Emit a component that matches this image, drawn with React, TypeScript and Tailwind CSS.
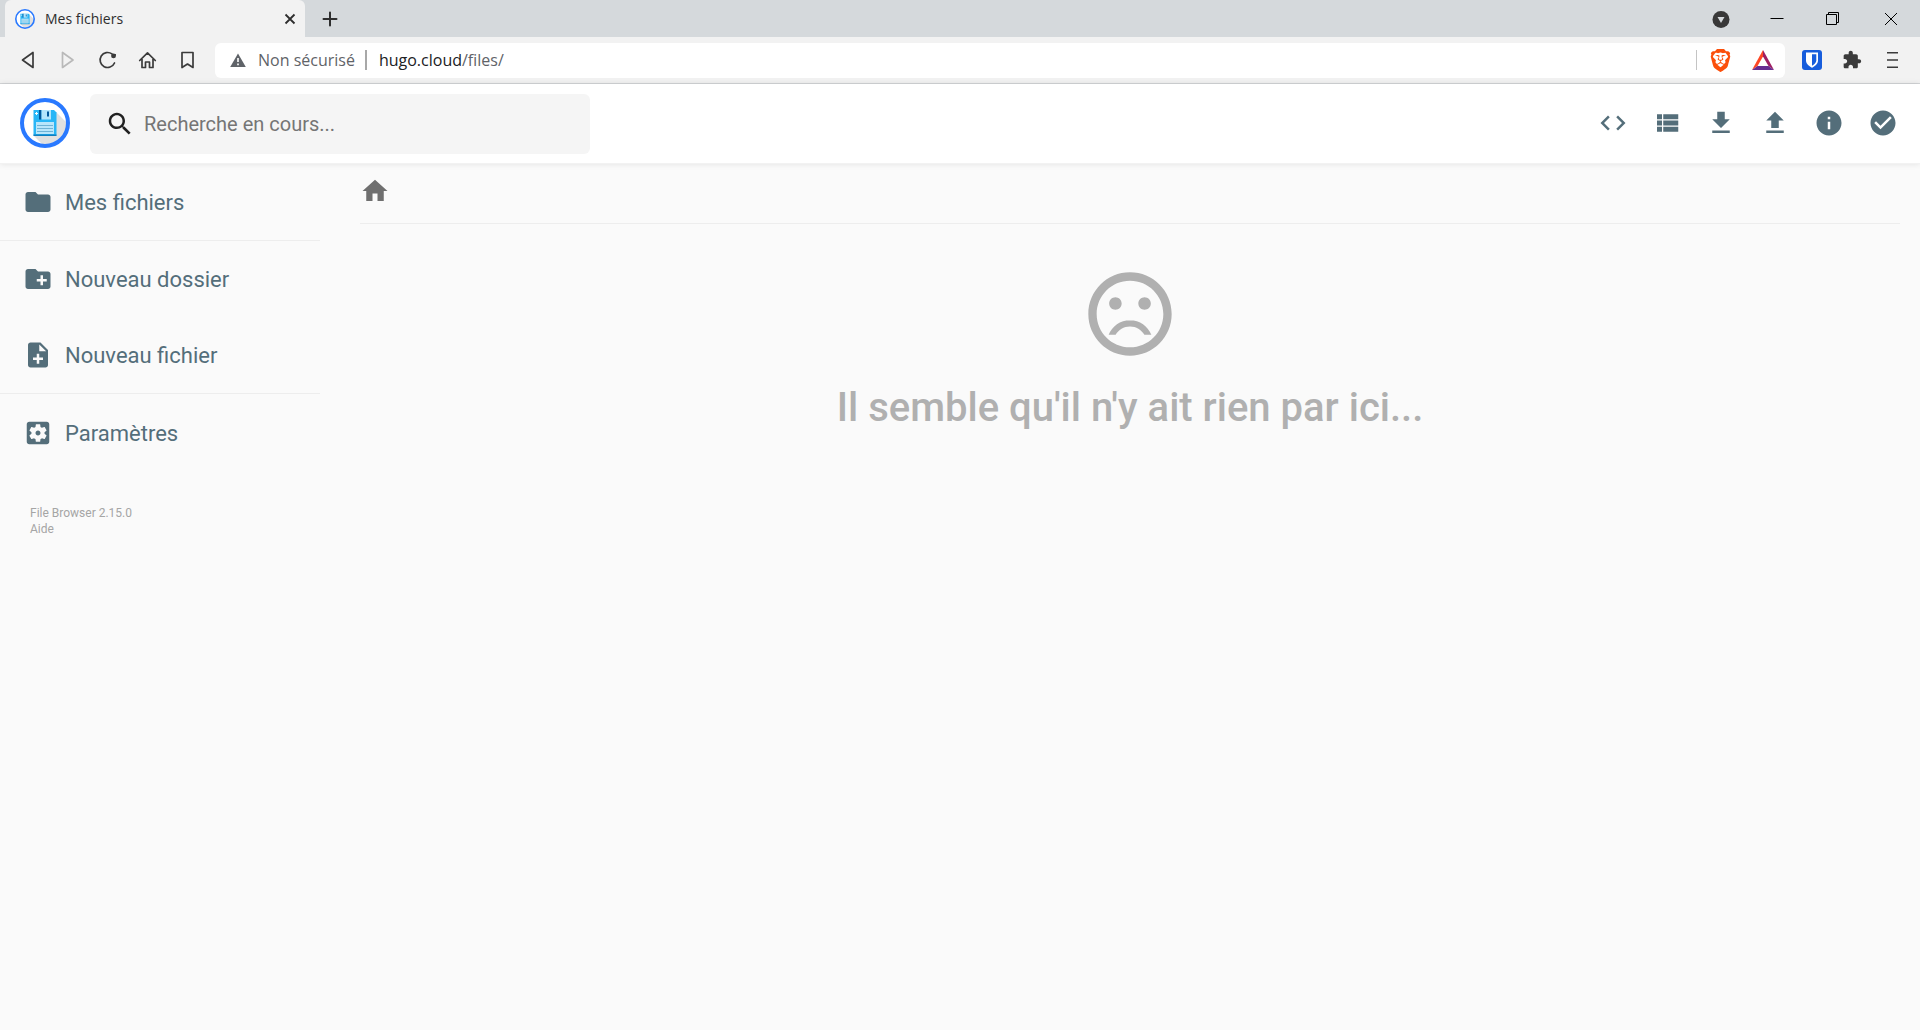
import React from 'react';
import { SiBrave } from 'react-icons/si';

const paths = {
  code: 'M9.4 16.6L4.8 12l4.6-4.6L8 6l-6 6 6 6 1.4-1.4zm5.2 0l4.6-4.6-4.6-4.6L16 6l6 6-6 6-1.4-1.4z',
  list: 'M4 14h4v-4H4v4zm0 5h4v-4H4v4zM4 9h4V5H4v4zm5 5h12v-4H9v4zm0 5h12v-4H9v4zM9 5v4h12V5H9z',
  fileDownload: 'M19 9h-4V3H9v6H5l7 7 7-7zM5 18v2h14v-2H5z',
  fileUpload: 'M9 16h6v-6h4l-7-7-7 7h4zm-4 2h14v2H5z',
  info: 'M12 2C6.48 2 2 6.48 2 12s4.48 10 10 10 10-4.48 10-10S17.52 2 12 2zm1 15h-2v-6h2v6zm0-8h-2V7h2v2z',
  check: 'M12 2C6.48 2 2 6.48 2 12s4.48 10 10 10 10-4.48 10-10S17.52 2 12 2zm-2 15l-5-5 1.41-1.41L10 14.17l7.59-7.59L19 8l-9 9z',
  search: 'M15.5 14h-.79l-.28-.27C15.41 12.59 16 11.11 16 9.5 16 5.91 13.09 3 9.5 3S3 5.91 3 9.5 5.91 16 9.5 16c1.61 0 3.09-.59 4.23-1.57l.27.28v.79l5 4.99L20.49 19l-4.99-5zm-6 0C7.01 14 5 11.99 5 9.5S7.01 5 9.5 5 14 7.01 14 9.5 11.99 14 9.5 14z',
  folder: 'M10 4H4c-1.1 0-1.99.9-1.99 2L2 18c0 1.1.9 2 2 2h16c1.1 0 2-.9 2-2V8c0-1.1-.9-2-2-2h-8l-2-2z',
  newFolder: 'M20 6h-8l-2-2H4c-1.11 0-1.99.89-1.99 2L2 18c0 1.11.89 2 2 2h16c1.11 0 2-.89 2-2V8c0-1.11-.89-2-2-2zm-1 8h-3v3h-2v-3h-3v-2h3V9h2v3h3v2z',
  newFile: 'M14 2H6c-1.1 0-1.99.9-1.99 2L4 20c0 1.1.89 2 1.99 2H18c1.1 0 2-.9 2-2V8l-6-6zm2 14h-3v3h-2v-3H8v-2h3v-3h2v3h3v2zm-3-7V3.5L18.5 9H13z',
  settings: 'M12 10c-1.1 0-2 .9-2 2s.9 2 2 2 2-.9 2-2-.9-2-2-2zm7-7H5c-1.11 0-2 .9-2 2v14c0 1.1.89 2 2 2h14c1.11 0 2-.9 2-2V5c0-1.1-.89-2-2-2zm-1.75 9c0 .23-.02.46-.05.68l1.48 1.16c.13.11.17.3.08.45l-1.4 2.42c-.09.15-.27.21-.43.15l-1.74-.7c-.36.28-.76.51-1.18.69l-.26 1.85c-.03.17-.18.3-.35.3h-2.8c-.17 0-.32-.13-.35-.29l-.26-1.85c-.43-.18-.82-.41-1.18-.69l-1.74.7c-.16.06-.34 0-.43-.15l-1.4-2.42c-.09-.15-.05-.34.08-.45l1.48-1.16c-.03-.23-.05-.46-.05-.69 0-.23.02-.46.05-.68l-1.48-1.16c-.13-.11-.17-.3-.08-.45l1.4-2.42c.09-.15.27-.21.43-.15l1.74.7c.36-.28.76-.51 1.18-.69l.26-1.85c.03-.17.18-.3.35-.3h2.8c.17 0 .32.13.35.29l.26 1.85c.43.18.82.41 1.18.69l1.74-.7c.16-.06.34 0 .43.15l1.4 2.42c.09.15.05.34-.08.45l-1.48 1.16c.03.23.05.46.05.69z',
  home: 'M10 20v-6h4v6h5v-8h3L12 3 2 12h3v8z',
  sad: 'M11.99 2C6.47 2 2 6.48 2 12s4.47 10 9.99 10C17.52 22 22 17.52 22 12S17.52 2 11.99 2zM12 20c-4.42 0-8-3.58-8-8s3.58-8 8-8 8 3.58 8 8-3.58 8-8 8zm3.5-9c.83 0 1.5-.67 1.5-1.5S16.33 8 15.5 8 14 8.67 14 9.5s.67 1.5 1.5 1.5zm-7 0c.83 0 1.5-.67 1.5-1.5S9.33 8 8.5 8 7 8.67 7 9.5 7.67 11 8.5 11zm3.5 2.5c-2.33 0-4.32 1.45-5.12 3.5h1.67c.69-1.19 1.97-2 3.45-2s2.75.81 3.45 2h1.67c-.8-2.05-2.79-3.5-5.12-3.5z',
  puzzle: 'M20.5 11H19V7c0-1.1-.9-2-2-2h-4V3.5C13 2.12 11.88 1 10.5 1S8 2.12 8 3.5V5H4c-1.1 0-1.99.9-1.99 2v3.8H3.5c1.49 0 2.7 1.21 2.7 2.7s-1.21 2.7-2.7 2.7H2V20c0 1.1.9 2 2 2h3.8v-1.5c0-1.49 1.21-2.7 2.7-2.7 1.49 0 2.7 1.21 2.7 2.7V22H17c1.1 0 2-.9 2-2v-4h1.5c1.38 0 2.5-1.12 2.5-2.5S21.88 11 20.5 11z',
};

function Icon({ d, className }: { d: string; className: string }) {
  return (
    <svg viewBox="0 0 24 24" fill="currentColor" aria-hidden="true" className={className}>
      <path d={d} />
    </svg>
  );
}

function Logo({ className }: { className: string }) {
  return (
    <svg viewBox="0 0 50 50" aria-hidden="true" className={className}>
      <circle cx="25" cy="25" r="23" fill="#fff" />
      <path d="M36 14L48 26A23 23 0 0 1 24 48L13.5 37.5Z" fill="#e0e0e0" />
      <circle cx="25" cy="25" r="23" fill="none" stroke="#2979ff" strokeWidth="4" />
      <path d="M13.5 12H34l2.5 2.5V37.5H13.5z" fill="#29b6f6" />
      <path d="M13.5 36.5h23V38h-23z" fill="#0f7fc0" />
      <path d="M15 15.500h3M16.500 14v3" stroke="#fff" strokeWidth="1" />
      <path d="M19 12h2.500v9.500H19z" fill="#01579b" />
      <path d="M21.500 12H31v9.500h-9.500z" fill="#b3e5fc" />
      <path d="M27 13.500h2v5h-2z" fill="#01579b" />
      <path d="M16 24h18v12H16z" fill="#b9e6fb" />
      <path d="M17 27.500h16M17 30.500h16M17 33.500h16" stroke="#6fb3d6" strokeWidth="1" />
    </svg>
  );
}

function NavButton({ label, disabled, children }: { label: string; disabled?: boolean; children: React.ReactNode }) {
  return (
    <button aria-label={label} disabled={disabled} className={disabled ? 'text-[#b9b9b9]' : 'text-[#3b3b3b]'}>
      <svg viewBox="0 0 20 20" fill="none" stroke="currentColor" strokeWidth="1.7" strokeLinejoin="round" strokeLinecap="round" className="size-5">
        {children}
      </svg>
    </button>
  );
}

function TabStrip() {
  return (
    <div className="flex h-[37px] items-center bg-[#d5d9dc] pl-[5px]">
      <div className="flex h-full w-[300px] items-center rounded-t-md bg-[#f2f2f2] pr-2 pl-2.5 text-[#2e2e2e]">
        <Logo className="size-5" />
        <span className="ml-2.5 flex-1 font-['Open_Sans',sans-serif] text-sm">Mes fichiers</span>
        <button aria-label="Fermer l’onglet" className="text-[#2e2e2e]">
          <svg viewBox="0 0 14 14" stroke="currentColor" strokeWidth="1.8" className="size-3.5">
            <path d="M2.500 2.500l9 9M11.500 2.500l-9 9" />
          </svg>
        </button>
      </div>
      <button aria-label="Nouvel onglet" className="ml-[17px] text-[#2e2e2e]">
        <svg viewBox="0 0 16 16" stroke="currentColor" strokeWidth="2" strokeLinecap="round" className="size-4">
          <path d="M8 1.500v13M1.500 8h13" />
        </svg>
      </button>
      <div className="ml-auto flex items-center gap-[38px] text-black">
        <button aria-label="Rechercher dans les onglets">
          <svg viewBox="0 0 18 18" className="size-[18px]">
            <circle cx="9" cy="9.500" r="8.500" fill="#383838" />
            <path d="M5.500 7h7L9 13z" fill="#d5d9dc" />
          </svg>
        </button>
        <button aria-label="Réduire">
          <svg viewBox="0 0 18 18" stroke="currentColor" className="size-[18px]">
            <path d="M2.500 8.500h13" />
          </svg>
        </button>
        <button aria-label="Restaurer">
          <svg viewBox="0 0 18 18" fill="none" stroke="currentColor" className="size-[18px]">
            <path d="M2.500 4.500h10v10h-10zM4.500 4.500v-2h10v10h-2" />
          </svg>
        </button>
      </div>
      <button aria-label="Fermer" className="mr-5 ml-10">
        <svg viewBox="0 0 18 18" stroke="currentColor" className="size-[18px]">
          <path d="M3 3l12 12M15 3L3 15" />
        </svg>
      </button>
    </div>
  );
}

function Toolbar() {
  return (
    <div className="flex h-[47px] items-center border-b border-[#d3d5d7] bg-[#f2f2f2] px-[18px]">
      <div className="flex gap-5">
        <NavButton label="Précédent">
          <path d="M15 2.500v15L4.500 10z" />
        </NavButton>
        <NavButton label="Suivant" disabled>
          <path d="M4.500 2.500v15L15 10z" />
        </NavButton>
        <NavButton label="Actualiser">
          <path d="M14 3.900A7.500 7.500 0 1 0 16.500 13" />
          <circle cx="15.500" cy="5.900" r="2.400" fill="currentColor" stroke="none" />
          <path d="M15.500 4h2.400v2.400z" fill="currentColor" stroke="none" />
        </NavButton>
        <NavButton label="Accueil">
          <path d="M1.700 10.500L9.500 2.800l7.800 7.700M4 9v8.500h3.500V12h4v5.500H15V9" />
        </NavButton>
        <NavButton label="Favori">
          <path d="M4 2.500h11v15l-5.500-3.500L4 17.500z" />
        </NavButton>
      </div>
      <div className="ml-[17px] flex h-[35px] flex-1 items-center rounded-md bg-white pr-[11px] pl-[15px] font-['Open_Sans',sans-serif] text-base">
        <svg viewBox="0 0 16 16" aria-hidden="true" className="size-4">
          <path d="M8 1.500L15.800 15H.2z" fill="#5f6368" />
          <path d="M8 6v4M8 11.500v1.700" stroke="#fff" strokeWidth="1.6" />
        </svg>
        <span className="ml-3 text-[#5f6368]">Non sécurisé</span>
        <span className="ml-2.5 h-5 w-0.5 bg-[#a8a8a8]" />
        <span className="ml-3 text-[#5f6368]">
          <span className="text-[#202124]">hugo.cloud</span>/files/
        </span>
        <span className="ml-auto h-5 w-px bg-[#c4c4c4]" />
        <button aria-label="Brave Shields" className="ml-3">
          <SiBrave className="size-[23px] text-[#fb4f0b]" />
        </button>
        <button aria-label="Brave Rewards" className="ml-5">
          <svg viewBox="0 0 22 20" className="h-5 w-[22px]">
            <path d="M11 0v6.500L5.500 16 0 20z" fill="#ff4724" />
            <path d="M11 0l11 20-5.500-4L11 6.500z" fill="#9e1f63" />
            <path d="M0 20l5.500-4h11l5.500 4z" fill="#662d91" />
          </svg>
        </button>
      </div>
      <div className="ml-[17px] flex items-center gap-5 text-[#3b3b3b]">
        <button aria-label="Bitwarden">
          <svg viewBox="0 0 20 20" className="size-5">
            <rect width="20" height="20" rx="3" fill="#175ddc" />
            <path d="M4 2.500h12v8c0 3.500-3.500 6-6 7.200-2.500-1.200-6-3.700-6-7.200z" fill="#fff" />
            <path d="M10 4.300h4.300v6.200c0 2.300-2.200 4-4.300 5.200z" fill="#175ddc" />
          </svg>
        </button>
        <button aria-label="Extensions">
          <Icon d={paths.puzzle} className="size-5" />
        </button>
        <button aria-label="Menu">
          <svg viewBox="0 0 20 20" stroke="currentColor" strokeWidth="1.6" className="size-5">
            <path d="M5 2.800h11M5 10h11M5 17.200h11" />
          </svg>
        </button>
      </div>
    </div>
  );
}

const actions = [
  { label: 'Console', d: paths.code },
  { label: 'Changer la vue', d: paths.list },
  { label: 'Télécharger', d: paths.fileDownload },
  { label: 'Importer', d: paths.fileUpload },
  { label: 'Informations', d: paths.info },
  { label: 'Sélection multiple', d: paths.check },
];

function Header() {
  return (
    <header className="relative flex h-20 items-center border-b border-black/5 bg-white pr-2.5 pb-px pl-5 shadow-[0_0_6px_rgba(0,0,0,0.1)]">
      <Logo className="size-[50px]" />
      <label className="mt-0.5 ml-5 flex h-[60px] w-[500px] items-center rounded-md bg-[#f5f5f5] px-[15px] text-[#212121]">
        <Icon d={paths.search} className="size-[30px]" />
        <input
          type="text"
          aria-label="Rechercher"
          placeholder="Recherche en cours..."
          className="ml-[9px] min-w-0 flex-1 bg-transparent text-xl outline-none placeholder:text-[#757575]"
        />
      </label>
      <div className="ml-auto flex text-[#546e7a]">
        {actions.map((a) => (
          <button key={a.label} aria-label={a.label} className="p-3">
            <Icon d={a.d} className="size-[30px]" />
          </button>
        ))}
      </div>
    </header>
  );
}

function NavItem({ d, label }: { d: string; label: string }) {
  return (
    <button className="flex h-[76px] w-full items-center gap-3 pl-[23px] text-[22px] text-[#546e7a]">
      <Icon d={d} className="size-[30px]" />
      {label}
    </button>
  );
}

function Sidebar() {
  return (
    <nav className="w-80 shrink-0">
      <NavItem d={paths.folder} label="Mes fichiers" />
      <div className="border-y border-black/5">
        <NavItem d={paths.newFolder} label="Nouveau dossier" />
        <NavItem d={paths.newFile} label="Nouveau fichier" />
      </div>
      <div className="pt-px">
        <NavItem d={paths.settings} label="Paramètres" />
      </div>
      <div className="mt-[34px] flex flex-col items-start pl-[30px] text-xs text-[#a5a5a5]">
        <a href="#version">File Browser 2.15.0</a>
        <a href="#aide">Aide</a>
      </div>
    </nav>
  );
}

export default function App() {
  return (
    <div className="flex min-h-screen flex-col bg-[#fafafa] font-[Roboto,sans-serif]">
      <TabStrip />
      <Toolbar />
      <Header />
      <div className="flex flex-1">
        <Sidebar />
        <main className="mr-5 ml-10 flex-1">
          <div className="flex h-[60px] items-start border-b border-black/5 pt-3 text-[#6f6f6f]">
            <a href="#files" aria-label="Accueil">
              <Icon d={paths.home} className="size-[30px]" />
            </a>
          </div>
          <h2 className="flex flex-col items-center pt-10 text-[40px] leading-[48px] font-medium text-[#b0b0b0]">
            <Icon d={paths.sad} className="size-[100px]" />
            <span className="mt-5">Il semble qu'il n'y ait rien par ici...</span>
          </h2>
        </main>
      </div>
    </div>
  );
}
